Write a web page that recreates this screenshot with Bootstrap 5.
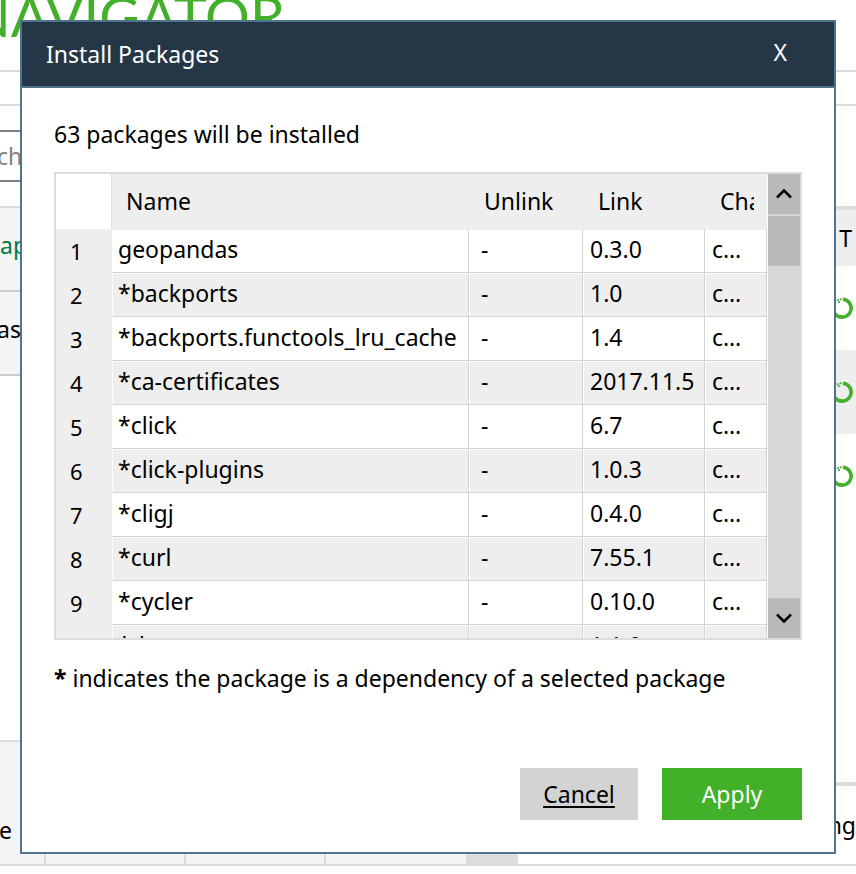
<!DOCTYPE html>
<html lang="en">
<head>
<meta charset="utf-8">
<meta name="viewport" content="width=device-width, initial-scale=1">
<title>Install Packages</title>
<link href="https://cdn.jsdelivr.net/npm/bootstrap@5.3.0/dist/css/bootstrap.min.css" rel="stylesheet">
<style>
  :root { --line: #dcdcdc; --green: #43b02a; --navy: #253746; --edge: #4f748b; --zebra: #eeeeee; --pale: #f4f4f4; }
  body { font-family: "Noto Sans", "Open Sans", sans-serif; font-size: 23px; line-height: 32px; color: #000; background: #fff; overflow: hidden; }

  /* Main window behind the dialog */
  .app { padding-bottom: 8px; }
  .app-brand { height: 72px; border-bottom: 2px solid var(--line); color: var(--green); font: 400 56px/72px Lato, sans-serif; white-space: nowrap; }
  .app-brand span { margin-left: -32px; display: block; margin-top: -20px; }
  .app-strip { height: 34px; border-bottom: 2px solid var(--line); }
  .app-main { border-bottom: 2px solid var(--line); }
  .env-pane { width: 518px; }
  .env-search { height: 52px; margin: 24px 0; border: 2px solid #808080; border-left: 0; padding: 0; width: 440px; font-size: 23px; text-indent: -3px; }
  .env-search::placeholder { color: #808080; }
  .env-item { height: 84px; padding-bottom: 8px; border-bottom: 2px solid #cccccc; background: var(--pale); }
  .env-active { color: #007a45; }
  .env-base { text-indent: -3px; }
  .env-list { border-top: 2px solid var(--line); }
  .env-tools { height: 124px; border-top: 2px solid var(--line); background: var(--pale); }
  .env-tools > div { width: 140px; border-right: 2px solid var(--line); }
  .env-tools > .tool-first { width: 46px; padding-top: 72px; text-indent: -1px; }
  .env-tools > .tool-last { width: 52px; background: var(--line); }
  .env-tools > .tool-wide { border-right: 0; }
  .pkg-pane { padding-top: 100px; }
  .pkg-head { height: 60px; border-top: 4px solid var(--line); background: var(--zebra); padding-right: 4px; }
  .pkg-item { height: 84px; padding-right: 2px; }
  .pkg-item:nth-of-type(odd) { background: var(--zebra); }
  .pkg-foot { height: 82px; border-top: 4px solid var(--line); }

  /* Dialog */
  .dlg { max-width: none; margin: 20px; }
  .dlg .modal-content { border: 2px solid var(--edge); border-radius: 0; color: #000; }
  .dlg .modal-header { height: 66px; padding: 0 47px 0 24px; background: var(--navy); border-bottom: 2px solid var(--edge); border-radius: 0; color: #fff; }
  .dlg-title { font-size: 23px; line-height: 32px; font-weight: 400; }
  .dlg-close { font-size: 23px; line-height: 32px; padding-bottom: 4px; }
  .dlg .modal-body { padding: 30px 32px 32px; }

  .pkg-frame { border: 2px solid var(--line); height: 468px; margin: 22px 0; }
  .pkg-table { table-layout: fixed; width: 100%; border-collapse: separate; border-spacing: 0; line-height: 32px; }
  .pkg-table th { font-weight: 400; }
  .pkg-table thead th { height: 55px; padding: 0 13px 2px 15px; background: var(--zebra); overflow: hidden; white-space: nowrap; }
  .pkg-table thead th:nth-of-type(1) { padding-left: 14px; }
  .pkg-table thead td { background: #fff; border-right: 1px solid #dfdfdf; }
  .pkg-table thead .clip { display: block; overflow: hidden; }
  .pkg-table tbody tr { height: 44px; }
  .pkg-table tbody td { padding: 0 0 4px 7px; border-right: 1px solid #d4d4d4; border-bottom: 1px solid #d4d4d4; white-space: nowrap; overflow: hidden; }
  .pkg-table tbody td:nth-of-type(1) { padding-left: 6px; }
  .pkg-table tbody td:nth-of-type(2) { padding-left: 12px; }
  .pkg-table tbody th { background: var(--zebra); padding: 0 0 0 14px; font-size: 22px; border-right: 1px solid var(--zebra); }
  .pkg-table tbody tr:nth-child(even) td { background: var(--zebra); box-shadow: inset 1px 1px #fff; }
  .pkg-table tbody tr:first-child td { box-shadow: inset 0 1px var(--zebra); }

  .scroller { width: 32px; background: #d7d7d7; margin-left: 1px; }
  .scroller button { height: 40px; background: #bababa; }
  .scroller .thumb { height: 50px; margin-top: 2px; background: #bababa; }

  .dlg-actions { margin-top: 74px; gap: 24px; }
  .dlg-btn { height: 52px; border: 0; border-radius: 0; padding: 0; font-size: 23px; }
  .btn-cancel, .btn-cancel:hover { width: 118px; background: #d3d3d3; color: #000; text-decoration: underline; text-decoration-thickness: 2px; text-underline-offset: 3px; text-decoration-skip-ink: none; }
  .btn-apply, .btn-apply:hover { width: 140px; background: var(--green); color: #fff; }
</style>
</head>
<body>
<svg class="d-none">
  <symbol id="ring" viewBox="0 0 24 24"><g fill="none" stroke="#43b02a"><path d="M13 3.200A9 9 0 1 1 4.500 17" stroke-width="3.600"/><path d="M4 8l2-3M7 4.500l5-2M8 6.500l3-1" stroke-width="1.600" stroke-dasharray="2 1"/></g></symbol>
</svg>
<div class="app d-flex flex-column min-vh-100">
  <header>
    <div class="app-brand overflow-hidden"><span>NAVIGATOR</span></div>
    <div class="app-strip"></div>
  </header>
  <main class="app-main d-flex flex-grow-1">
    <section class="env-pane d-flex flex-column flex-shrink-0">
      <div><input class="env-search d-block" type="text" placeholder="ch" aria-label="Search environments"></div>
      <div class="env-list">
        <div class="env-item env-active d-flex align-items-center">ap</div>
        <div class="env-item env-base d-flex align-items-center">ase</div>
      </div>
      <div class="env-tools d-flex mt-auto">
        <div class="tool-first">e</div><div></div><div></div><div class="tool-wide"></div><div class="tool-last border-0"></div>
      </div>
    </section>
    <section class="pkg-pane d-flex flex-column flex-grow-1 text-end">
      <div class="pkg-head d-flex align-items-center justify-content-end">T</div>
      <div class="pkg-item d-flex align-items-center justify-content-end bg-white"><svg width="24" height="24"><use href="#ring"/></svg></div>
      <div class="pkg-item d-flex align-items-center justify-content-end"><svg width="24" height="24"><use href="#ring"/></svg></div>
      <div class="pkg-item d-flex align-items-center justify-content-end bg-white"><svg width="24" height="24"><use href="#ring"/></svg></div>
      <div class="pkg-foot d-flex align-items-center justify-content-end mt-auto">ng</div>
    </section>
  </main>
</div>

<div class="modal d-block" role="dialog" aria-labelledby="dlg-title">
  <div class="modal-dialog dlg">
    <div class="modal-content">
      <div class="modal-header">
        <h1 class="dlg-title m-0" id="dlg-title">Install Packages</h1>
        <button type="button" class="dlg-close bg-transparent border-0 text-white pt-0 px-0" aria-label="Close">X</button>
      </div>
      <div class="modal-body">
        <p class="m-0">63 packages will be installed</p>
        <div class="pkg-frame d-flex">
          <div class="flex-grow-1 overflow-hidden">
            <table class="pkg-table">
              <colgroup><col style="width:56px"><col><col style="width:114px"><col style="width:122px"><col style="width:62px"></colgroup>
              <thead>
                <tr><td></td><th scope="col">Name</th><th scope="col">Unlink</th><th scope="col">Link</th><th scope="col"><span class="clip">Channel</span></th></tr>
              </thead>
              <tbody>
                <tr><th scope="row">1</th><td>geopandas</td><td>-</td><td>0.3.0</td><td>c…</td></tr>
                <tr><th scope="row">2</th><td>*backports</td><td>-</td><td>1.0</td><td>c…</td></tr>
                <tr><th scope="row">3</th><td>*backports.functools_lru_cache</td><td>-</td><td>1.4</td><td>c…</td></tr>
                <tr><th scope="row">4</th><td>*ca-certificates</td><td>-</td><td>2017.11.5</td><td>c…</td></tr>
                <tr><th scope="row">5</th><td>*click</td><td>-</td><td>6.7</td><td>c…</td></tr>
                <tr><th scope="row">6</th><td>*click-plugins</td><td>-</td><td>1.0.3</td><td>c…</td></tr>
                <tr><th scope="row">7</th><td>*cligj</td><td>-</td><td>0.4.0</td><td>c…</td></tr>
                <tr><th scope="row">8</th><td>*curl</td><td>-</td><td>7.55.1</td><td>c…</td></tr>
                <tr><th scope="row">9</th><td>*cycler</td><td>-</td><td>0.10.0</td><td>c…</td></tr>
                <tr><th scope="row">10</th><td>*descartes</td><td>-</td><td>1.1.0</td><td>c…</td></tr>
              </tbody>
            </table>
          </div>
          <div class="scroller d-flex flex-column flex-shrink-0">
            <button type="button" class="border-0 p-0 d-flex align-items-center justify-content-center" aria-label="Scroll up"><svg width="16" height="10" viewBox="0 0 16 10" fill="none" stroke="#000" stroke-width="2.600"><path d="M1 8.500l7-7 7 7"/></svg></button>
            <div class="thumb"></div>
            <button type="button" class="border-0 p-0 d-flex align-items-center justify-content-center mt-auto" aria-label="Scroll down"><svg width="16" height="10" viewBox="0 0 16 10" fill="none" stroke="#000" stroke-width="2.600"><path d="M1 1.500l7 7 7-7"/></svg></button>
          </div>
        </div>
        <p class="m-0 text-nowrap"><b>*</b> indicates the package is a dependency of a selected package</p>
        <div class="dlg-actions d-flex justify-content-end">
          <button type="button" class="btn dlg-btn btn-cancel">Cancel</button>
          <button type="button" class="btn dlg-btn btn-apply">Apply</button>
        </div>
      </div>
    </div>
  </div>
</div>
<script src="https://cdn.jsdelivr.net/npm/bootstrap@5.3.0/dist/js/bootstrap.bundle.min.js"></script>
</body>
</html>
